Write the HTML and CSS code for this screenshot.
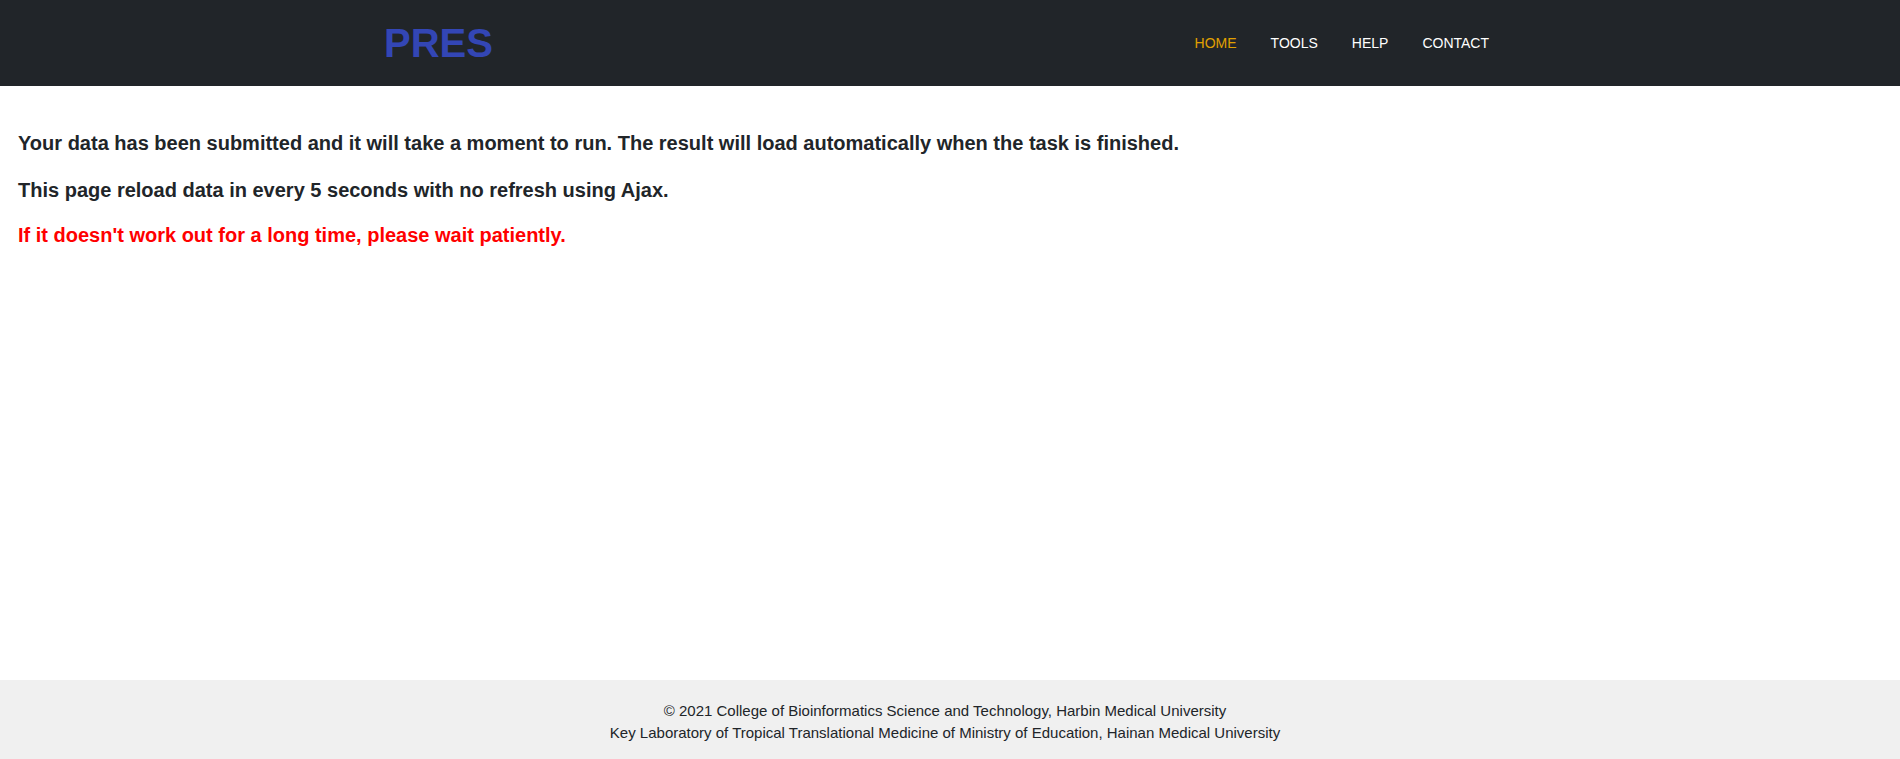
FILE: index.html
```html
<!DOCTYPE html>
<html lang="en">
<head>
<meta charset="utf-8">
<title>PRES</title>
<link rel="stylesheet" href="styles.css">
</head>
<body>
<header class="topbar">
  <div class="topbar-inner">
    <a class="brand" href="#">PRES</a>
    <nav class="nav">
      <a class="nav-link active" href="#">HOME</a>
      <a class="nav-link" href="#">TOOLS</a>
      <a class="nav-link" href="#">HELP</a>
      <a class="nav-link" href="#">CONTACT</a>
    </nav>
  </div>
</header>
<main class="content">
  <h5 class="msg">Your data has been submitted and it will take a moment to run. The result will load automatically when the task is finished.</h5>
  <h5 class="msg msg-second">This page reload data in every 5 seconds with no refresh using Ajax.</h5>
  <h5 class="msg msg-warn">If it doesn't work out for a long time, please wait patiently.</h5>
</main>
<footer class="footer">
  <p class="footer-line">© 2021 College of Bioinformatics Science and Technology, Harbin Medical University</p>
  <p class="footer-line">Key Laboratory of Tropical Translational Medicine of Ministry of Education, Hainan Medical University</p>
</footer>
</body>
</html>
```
FILE: styles.css
```css
html, body {
  margin: 0;
  padding: 0;
  height: 100%;
}
body {
  font-family: "Liberation Sans", Arial, sans-serif;
  color: #212529;
  background: #fff;
  display: flex;
  flex-direction: column;
  min-height: 759px;
}
.topbar {
  background: #212529;
  height: 86px;
  flex: none;
}
.topbar-inner {
  height: 100%;
  display: flex;
  align-items: center;
  justify-content: space-between;
  padding: 0 411px 0 384px;
}
.brand {
  color: #3346b5;
  font-weight: bold;
  font-size: 40px;
  text-decoration: none;
  line-height: 1;
  margin-top: -1px;
}
.nav {
  display: flex;
  align-items: center;
  gap: 34px;
  margin-top: -1px;
}
.nav-link {
  color: #fff;
  font-size: 14px;
  text-decoration: none;
  line-height: 20px;
}
.nav-link.active {
  color: #e0a000;
}
.content {
  flex: 1;
  padding: 45px 18px 0;
}
.msg {
  font-size: 20px;
  font-weight: bold;
  line-height: 24px;
  margin: 0 0 23px;
}
.msg-second {
  margin-bottom: 21px;
}
.msg-warn {
  color: #ff0000;
}
.footer {
  background: #f0f0f0;
  height: 79px;
  flex: none;
  box-sizing: border-box;
  padding: 20px 10px 0 0;
  text-align: center;
}
.footer-line {
  margin: 0;
  font-size: 15px;
  line-height: 22px;
  color: #212529;
}
```
